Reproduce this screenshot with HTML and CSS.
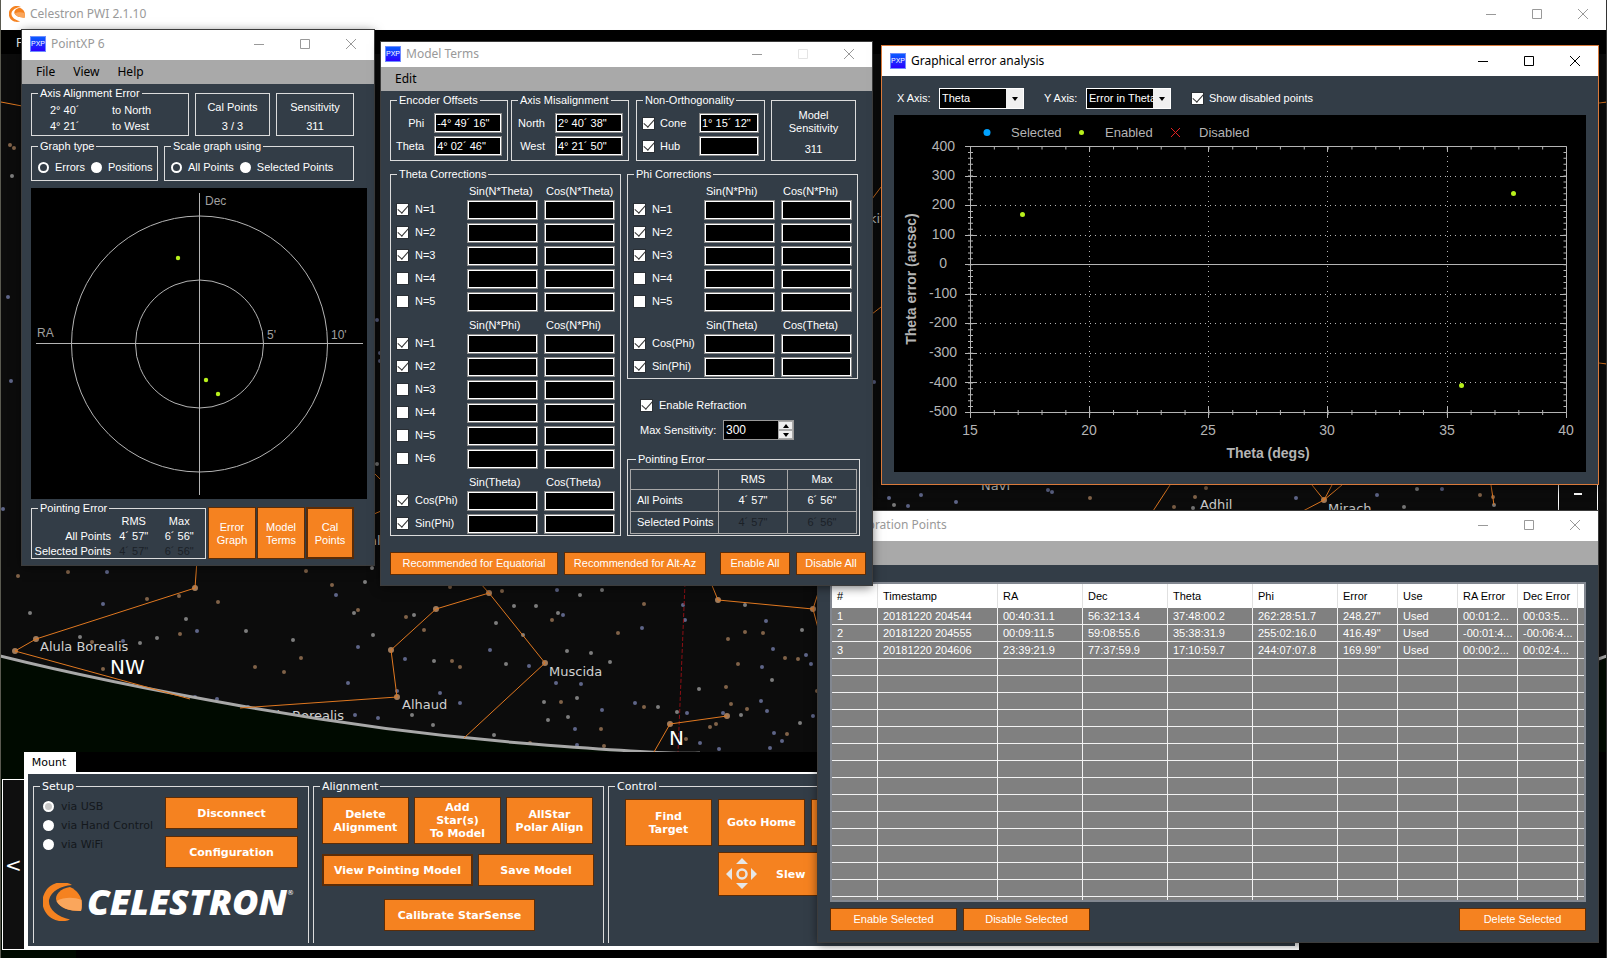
FILE: index.html
```html
<!DOCTYPE html>
<html lang="en">
<head>
<meta charset="utf-8">
<title>Celestron PWI 2.1.10</title>
<link rel="stylesheet" href="styles.css">
</head>
<body>
<svg class="defs" width="0" height="0" aria-hidden="true">
  <symbol id="globe" viewBox="0 0 39 38">
    <path fill="#f58220" d="M29 2A19.500 19.500 0 1 0 27 36.500C14 34 5 26 6 17C8 8 18 3 29 2Z"/>
    <path fill="#f58220" d="M27 4C34 7 39 14 39 21Q39 25 38 28C26 28 17 25 13.500 18C11 12 18 5 27 4Z"/>
    <path fill="#faa65c" d="M13.500 18C21 14 31 14 38.500 17Q39 25 38 28C26 28 17 25 13.500 18Z"/>
  </symbol>
  <symbol id="min" viewBox="0 0 12 12"><path d="M1 6.500H11" fill="none" stroke="currentColor"/></symbol>
  <symbol id="max" viewBox="0 0 12 12"><path d="M1.500 1.500H10.500V10.500H1.500Z" fill="none" stroke="currentColor"/></symbol>
  <symbol id="close" viewBox="0 0 12 12"><path d="M1 1L11 11M11 1L1 11" fill="none" stroke="currentColor"/></symbol>
</svg>

<svg class="sky" viewBox="0 0 1607 958" preserveAspectRatio="xMidYMid slice" aria-hidden="true">
  <rect width="1607" height="958" fill="#0c0c0c"/>
  <g fill="none" stroke-linecap="round" stroke-width="4">
    <path stroke="#7d7d7d" d="M30 613h0M186 619h0M246 631h0M157 638h0M140 643h0M80 637h0M293 640h0M373 635h0M365 582h0M354 613h0M372 568h0M414 615h0M412 715h0M602 590h0M580 595h0M514 606h0M536 606h0M558 613h0M496 623h0M523 635h0M567 651h0M591 653h0M506 664h0M434 661h0M610 662h0M577 698h0M544 702h0M658 707h0M433 725h0M568 717h0M548 720h0M494 735h0M745 605h0M802 630h0M772 680h0M699 689h0M741 715h0M677 712h0M800 723h0M12 176h0M377 464h0M894 505h0M1193 508h0M1404 507h0M1417 489h0M1494 505h0"/>
    <path stroke="#5e6588" d="M107 572h0M103 604h0M197 631h0M123 641h0M348 683h0M358 647h0M397 691h0M195 697h0M217 699h0M248 707h0M355 715h0M378 718h0M336 595h0M405 659h0M557 590h0M563 615h0M642 628h0M490 650h0M529 666h0M440 693h0M460 703h0M556 683h0M581 684h0M602 710h0M635 703h0M575 729h0M577 745h0M683 605h0M685 620h0M766 621h0M773 649h0M806 655h0M811 664h0M762 667h0M761 701h0M767 711h0M723 713h0M813 716h0M687 713h0M774 733h0M782 741h0M700 743h0M719 749h0M770 748h0M8 297h0M11 381h0M3 509h0M377 320h0M380 353h0M380 361h0M889 498h0M908 506h0M921 495h0M956 502h0M1048 490h0M1052 492h0M1296 498h0M1377 495h0M1442 489h0M874 382h0"/>
    <path stroke="#806248" d="M18 576h0M68 572h0M147 599h0M179 596h0M218 602h0M180 634h0M92 642h0M103 669h0M301 658h0M255 667h0M284 672h0M332 585h0M358 610h0M306 571h0M406 617h0M450 587h0M502 591h0M552 620h0M424 630h0M618 633h0M644 604h0M452 661h0M460 667h0M561 702h0M644 707h0M601 729h0M530 743h0M604 746h0M745 632h0M763 633h0M728 639h0M785 658h0M798 659h0M738 664h0M726 687h0M731 704h0M747 709h0M716 724h0M710 727h0M787 734h0M686 739h0M817 691h0M10 145h0M14 148h0M1090 498h0M1195 497h0M1174 507h0M1206 488h0M1480 495h0M1493 497h0"/>
    <path stroke="#a07a5a" stroke-width="6" d="M195 588h0M36 639h0M15 651h0M397 697h0M391 650h0M436 609h0M489 593h0M545 663h0M670 724h0M727 716h0M718 600h0M813 609h0M1324 500h0"/>
  </g>
  <path fill="none" stroke="#8c0f14" stroke-dasharray="4 2" d="M685 583L678 752"/>
  <g class="star-name">
    <text x="40" y="651">Alula Borealis</text>
    <text x="344" y="720" text-anchor="end">Tania Borealis</text>
    <text x="402" y="709">Alhaud</text>
    <text x="549" y="676">Muscida</text>
    <text x="981" y="490">Navi</text>
    <text x="1200" y="509">Adhil</text>
    <text x="1328" y="513">Mirach</text>
    <text x="369" y="545">al</text>
    <text x="869" y="223">kif</text>
  </g>
  <path fill="#000a00" d="M0 656Q220 708 420 732T690 752H1500L1607 656V958H0Z"/>
  <path fill="none" stroke="#a8a8a8" stroke-width="3" d="M0 656Q100 681 247 707T533 744T700 753M1590 662L1607 656"/>
  <path fill="none" stroke="#e07820" d="M1 102L22 106M197 560L195 588L36 639L15 651L150 688L190 699M240 708L397 697L391 650L436 609L489 593L545 663L464 738M480 583L489 593M654 752L670 724L727 716M711 583L718 600L813 609L819 590M813 609L819 632M374 473L381 480M374 514L381 511M872 199L881 187M872 314L881 307M1170 485L1153 511M1312 485L1324 500L1332 485M1342 485L1324 500L1303 511M1491 485L1494 505M1599 103L1607 102M1599 363L1607 364"/>
  <text class="compass" x="110" y="674">NW</text>
  <text class="compass" x="669" y="745">N</text>
</svg>

<div class="app">
  <header class="titlebar app-title">
    <svg class="app-icon"><use href="#globe"/></svg>
    <h1 class="caption">Celestron PWI 2.1.10</h1>
    <div class="controls">
      <button aria-label="Minimize"><svg><use href="#min"/></svg></button>
      <button aria-label="Maximize"><svg><use href="#max"/></svg></button>
      <button aria-label="Close"><svg><use href="#close"/></svg></button>
    </div>
  </header>
  <nav class="app-menu"><button>File</button></nav>
  <main class="view"></main>
  <section class="dock">
    <button class="drawer" aria-label="Hide panel">&lt;</button>
    <div class="tabs">
      <div class="tab-row"><button class="tab">Mount</button></div>
      <div class="panel">
        <fieldset class="panel-group setup">
          <legend>Setup</legend>
          <div class="setup-body">
            <div class="links">
              <label><input class="radio dim" type="radio" name="link" checked>via USB</label>
              <label><input class="radio" type="radio" name="link">via Hand Control</label>
              <label><input class="radio" type="radio" name="link">via WiFi</label>
            </div>
            <div class="stack">
              <button class="btn big">Disconnect</button>
              <button class="btn big">Configuration</button>
            </div>
          </div>
          <div class="logo">
            <svg class="logo-mark"><use href="#globe"/></svg>
            <span class="logo-name">CELESTRON</span><span class="logo-reg">®</span>
          </div>
        </fieldset>
        <fieldset class="panel-group align">
          <legend>Alignment</legend>
          <div class="align-top">
            <button class="btn big tall">Delete Alignment</button>
            <button class="btn big tall">Add<br>Star(s)<br>To Model</button>
            <button class="btn big tall">AllStar<br>Polar Align</button>
          </div>
          <div class="align-mid">
            <button class="btn big focus">View Pointing Model</button>
            <button class="btn big">Save Model</button>
          </div>
          <button class="btn big calibrate">Calibrate StarSense</button>
        </fieldset>
        <fieldset class="panel-group control">
          <legend>Control</legend>
          <div class="control-grid">
            <button class="btn big tall">Find<br>Target</button>
            <button class="btn big tall">Goto Home</button>
            <button class="btn big tall" aria-label="Stop"></button>
            <button class="btn big slew">
              <svg viewBox="0 0 32 32"><g fill="#e6e6e6"><path d="M10 6L16 0L22 6ZM10 25H22L16 31ZM6 10V22L0 16ZM25 10V22L31 16Z"/></g><circle cx="16" cy="16" r="4.500" fill="none" stroke="#e6e6e6" stroke-width="2.500"/></svg>
              Slew
            </button>
          </div>
        </fieldset>
      </div>
    </div>
  </section>
</div>

<button class="zoom-out" aria-label="Zoom out"><span class="dash"></span></button>

<section class="window pointxp">
  <header class="titlebar">
    <span class="pxp">PXP</span><h2 class="caption">PointXP 6</h2>
    <div class="controls">
      <button aria-label="Minimize"><svg><use href="#min"/></svg></button>
      <button aria-label="Maximize"><svg><use href="#max"/></svg></button>
      <button aria-label="Close"><svg><use href="#close"/></svg></button>
    </div>
  </header>
  <nav class="menu"><button>File</button><button>View</button><button>Help</button></nav>
  <div class="xp-body">
    <div class="xp-row">
      <fieldset class="group axis">
        <legend>Axis Alignment Error</legend>
        <dl class="axis-list"><dt>2° 40´</dt><dd>to North</dd><dt>4° 21´</dt><dd>to West</dd></dl>
      </fieldset>
      <div class="box cal"><span>Cal Points</span><span>3 / 3</span></div>
      <div class="box sens"><span>Sensitivity</span><span>311</span></div>
    </div>
    <div class="xp-row second">
      <fieldset class="group gtype">
        <legend>Graph type</legend>
        <div class="radios">
          <label><input class="radio" type="radio" name="gt" checked>Errors</label>
          <label><input class="radio" type="radio" name="gt">Positions</label>
        </div>
      </fieldset>
      <fieldset class="group scale">
        <legend>Scale graph using</legend>
        <div class="radios">
          <label><input class="radio" type="radio" name="sc" checked>All Points</label>
          <label><input class="radio" type="radio" name="sc">Selected Points</label>
        </div>
      </fieldset>
    </div>
    <svg class="polar" viewBox="31 188 336 311">
      <g fill="none" stroke="#b4b4b4">
        <path d="M199.500 193V495M36 343.500H363"/>
        <circle cx="199.500" cy="344" r="128"/><circle cx="199.500" cy="344" r="64"/>
      </g>
      <g fill="#b8f01c"><circle cx="178" cy="258" r="2.200"/><circle cx="206" cy="380" r="2.200"/><circle cx="218" cy="394" r="2.200"/></g>
      <g class="polar-label"><text x="205" y="205">Dec</text><text x="37" y="337">RA</text><text x="267" y="339">5'</text><text x="331" y="339">10'</text></g>
    </svg>
    <div class="xp-foot">
      <fieldset class="group perr">
        <legend>Pointing Error</legend>
        <table class="perr-table">
          <tr><td></td><th>RMS</th><th>Max</th></tr>
          <tr><th>All Points</th><td>4´ 57"</td><td>6´ 56"</td></tr>
          <tr><th>Selected Points</th><td class="off">4´ 57"</td><td class="off">6´ 56"</td></tr>
        </table>
      </fieldset>
      <button class="btn sq">Error<br>Graph</button>
      <button class="btn sq">Model<br>Terms</button>
      <button class="btn sq focus">Cal<br>Points</button>
    </div>
  </div>
</section>

<section class="window calib">
  <header class="titlebar">
    <span class="pxp">PXP</span><h2 class="caption">Calibration Points</h2>
    <div class="controls">
      <button aria-label="Minimize"><svg><use href="#min"/></svg></button>
      <button aria-label="Maximize"><svg><use href="#max"/></svg></button>
      <button aria-label="Close"><svg><use href="#close"/></svg></button>
    </div>
  </header>
  <nav class="menu" aria-label="Calibration menu"></nav>
  <div class="calib-body">
    <div class="list">
      <table class="points">
        <colgroup><col class="c-id"><col class="c-time"><col class="c-ang"><col class="c-ang"><col class="c-ang"><col class="c-ang"><col class="c-err"><col class="c-err"><col class="c-err"><col class="c-err"><col></colgroup>
        <thead><tr><th>#</th><th>Timestamp</th><th>RA</th><th>Dec</th><th>Theta</th><th>Phi</th><th>Error</th><th>Use</th><th>RA Error</th><th>Dec Error</th><th></th></tr></thead>
        <tbody>
          <tr><td>1</td><td>20181220 204544</td><td>00:40:31.1</td><td>56:32:13.4</td><td>37:48:00.2</td><td>262:28:51.7</td><td>248.27"</td><td>Used</td><td>00:01:2...</td><td>00:03:5...</td><td></td></tr>
          <tr><td>2</td><td>20181220 204555</td><td>00:09:11.5</td><td>59:08:55.6</td><td>35:38:31.9</td><td>255:02:16.0</td><td>416.49"</td><td>Used</td><td>-00:01:4...</td><td>-00:06:4...</td><td></td></tr>
          <tr><td>3</td><td>20181220 204606</td><td>23:39:21.9</td><td>77:37:59.9</td><td>17:10:59.7</td><td>244:07:07.8</td><td>169.99"</td><td>Used</td><td>00:00:2...</td><td>00:02:4...</td><td></td></tr>
          <tr><td><td><td><td><td><td><td><td><td><td><td></tr>
          <tr><td><td><td><td><td><td><td><td><td><td><td></tr>
          <tr><td><td><td><td><td><td><td><td><td><td><td></tr>
          <tr><td><td><td><td><td><td><td><td><td><td><td></tr>
          <tr><td><td><td><td><td><td><td><td><td><td><td></tr>
          <tr><td><td><td><td><td><td><td><td><td><td><td></tr>
          <tr><td><td><td><td><td><td><td><td><td><td><td></tr>
          <tr><td><td><td><td><td><td><td><td><td><td><td></tr>
          <tr><td><td><td><td><td><td><td><td><td><td><td></tr>
          <tr><td><td><td><td><td><td><td><td><td><td><td></tr>
          <tr><td><td><td><td><td><td><td><td><td><td><td></tr>
          <tr><td><td><td><td><td><td><td><td><td><td><td></tr>
          <tr><td><td><td><td><td><td><td><td><td><td><td></tr>
          <tr><td><td><td><td><td><td><td><td><td><td><td></tr>
          <tr><td><td><td><td><td><td><td><td><td><td><td></tr>
        </tbody>
      </table>
    </div>
    <div class="calib-foot">
      <button class="btn wide">Enable Selected</button>
      <button class="btn wide">Disable Selected</button>
      <button class="btn wide last">Delete Selected</button>
    </div>
  </div>
</section>

<section class="window terms-win">
  <header class="titlebar low">
    <span class="pxp">PXP</span><h2 class="caption">Model Terms</h2>
    <div class="controls">
      <button aria-label="Minimize"><svg><use href="#min"/></svg></button>
      <button class="faint" aria-label="Maximize" disabled><svg><use href="#max"/></svg></button>
      <button aria-label="Close"><svg><use href="#close"/></svg></button>
    </div>
  </header>
  <nav class="menu"><button>Edit</button></nav>
  <div class="mt-body">
    <div class="mt-top">
      <fieldset class="group offsets">
        <legend>Encoder Offsets</legend>
        <div class="pair">
          <label for="phi">Phi</label><input class="field" id="phi" value="-4° 49´ 16&quot;">
          <label for="theta">Theta</label><input class="field" id="theta" value="4° 02´ 46&quot;">
        </div>
      </fieldset>
      <fieldset class="group offsets">
        <legend>Axis Misalignment</legend>
        <div class="pair">
          <label for="north">North</label><input class="field" id="north" value="2° 40´ 38&quot;">
          <label for="west">West</label><input class="field" id="west" value="4° 21´ 50&quot;">
        </div>
      </fieldset>
      <fieldset class="group ortho">
        <legend>Non-Orthogonality</legend>
        <div class="pair ticks">
          <label><input class="tick" type="checkbox" checked>Cone</label><input class="field" aria-label="Cone value" value="1° 15´ 12&quot;">
          <label><input class="tick" type="checkbox" checked>Hub</label><input class="field" aria-label="Hub value">
        </div>
      </fieldset>
      <div class="box model-sens"><span>Model<br>Sensitivity</span><span>311</span></div>
    </div>
    <div class="mt-cols">
      <fieldset class="group corr">
        <legend>Theta Corrections</legend>
        <div class="terms">
          <span class="h1">Sin(N*Theta)</span><span>Cos(N*Theta)</span>
          <label><input class="tick" type="checkbox" checked>N=1</label><input class="field" aria-label="Sin 1 Theta"><input class="field" aria-label="Cos 1 Theta">
          <label><input class="tick" type="checkbox" checked>N=2</label><input class="field" aria-label="Sin 2 Theta"><input class="field" aria-label="Cos 2 Theta">
          <label><input class="tick" type="checkbox" checked>N=3</label><input class="field" aria-label="Sin 3 Theta"><input class="field" aria-label="Cos 3 Theta">
          <label><input class="tick" type="checkbox">N=4</label><input class="field" aria-label="Sin 4 Theta"><input class="field" aria-label="Cos 4 Theta">
          <label><input class="tick" type="checkbox">N=5</label><input class="field" aria-label="Sin 5 Theta"><input class="field" aria-label="Cos 5 Theta">
          <span class="h1">Sin(N*Phi)</span><span>Cos(N*Phi)</span>
          <label><input class="tick" type="checkbox" checked>N=1</label><input class="field" aria-label="Sin 1 Phi"><input class="field" aria-label="Cos 1 Phi">
          <label><input class="tick" type="checkbox" checked>N=2</label><input class="field" aria-label="Sin 2 Phi"><input class="field" aria-label="Cos 2 Phi">
          <label><input class="tick" type="checkbox">N=3</label><input class="field" aria-label="Sin 3 Phi"><input class="field" aria-label="Cos 3 Phi">
          <label><input class="tick" type="checkbox">N=4</label><input class="field" aria-label="Sin 4 Phi"><input class="field" aria-label="Cos 4 Phi">
          <label><input class="tick" type="checkbox">N=5</label><input class="field" aria-label="Sin 5 Phi"><input class="field" aria-label="Cos 5 Phi">
          <label><input class="tick" type="checkbox">N=6</label><input class="field" aria-label="Sin 6 Phi"><input class="field" aria-label="Cos 6 Phi">
          <span class="h1">Sin(Theta)</span><span>Cos(Theta)</span>
          <label><input class="tick" type="checkbox" checked>Cos(Phi)</label><input class="field" aria-label="Sin Theta Cos Phi"><input class="field" aria-label="Cos Theta Cos Phi">
          <label><input class="tick" type="checkbox" checked>Sin(Phi)</label><input class="field" aria-label="Sin Theta Sin Phi"><input class="field" aria-label="Cos Theta Sin Phi">
        </div>
      </fieldset>
      <div class="mt-right">
        <fieldset class="group corr">
          <legend>Phi Corrections</legend>
          <div class="terms">
            <span class="h1">Sin(N*Phi)</span><span>Cos(N*Phi)</span>
            <label><input class="tick" type="checkbox" checked>N=1</label><input class="field" aria-label="Sin 1"><input class="field" aria-label="Cos 1">
            <label><input class="tick" type="checkbox" checked>N=2</label><input class="field" aria-label="Sin 2"><input class="field" aria-label="Cos 2">
            <label><input class="tick" type="checkbox" checked>N=3</label><input class="field" aria-label="Sin 3"><input class="field" aria-label="Cos 3">
            <label><input class="tick" type="checkbox">N=4</label><input class="field" aria-label="Sin 4"><input class="field" aria-label="Cos 4">
            <label><input class="tick" type="checkbox">N=5</label><input class="field" aria-label="Sin 5"><input class="field" aria-label="Cos 5">
            <span class="h1">Sin(Theta)</span><span>Cos(Theta)</span>
            <label><input class="tick" type="checkbox" checked>Cos(Phi)</label><input class="field" aria-label="Cos Phi Sin Theta"><input class="field" aria-label="Cos Phi Cos Theta">
            <label><input class="tick" type="checkbox" checked>Sin(Phi)</label><input class="field" aria-label="Sin Phi Sin Theta"><input class="field" aria-label="Sin Phi Cos Theta">
          </div>
        </fieldset>
        <label class="refraction"><input class="tick" type="checkbox" checked>Enable Refraction</label>
        <div class="max-sens">
          <label for="maxs">Max Sensitivity:</label>
          <div class="spinner">
            <input id="maxs" type="text" value="300">
            <div class="arrows"><button aria-label="Up"><svg viewBox="0 0 6 4"><path d="M0 4L3 0L6 4Z"/></svg></button><button aria-label="Down"><svg viewBox="0 0 6 4"><path d="M0 0H6L3 4Z"/></svg></button></div>
          </div>
        </div>
        <fieldset class="group mt-err">
          <legend>Pointing Error</legend>
          <table class="grid-table">
            <tr><td></td><th>RMS</th><th>Max</th></tr>
            <tr><th class="rowh">All Points</th><td>4´ 57"</td><td>6´ 56"</td></tr>
            <tr><th class="rowh">Selected Points</th><td class="off">4´ 57"</td><td class="off">6´ 56"</td></tr>
          </table>
        </fieldset>
      </div>
    </div>
    <div class="mt-foot">
      <button class="btn eq">Recommended for Equatorial</button>
      <button class="btn az">Recommended for Alt-Az</button>
      <button class="btn all">Enable All</button>
      <button class="btn all">Disable All</button>
    </div>
  </div>
</section>

<section class="window graph active">
  <header class="titlebar">
    <span class="pxp">PXP</span><h2 class="caption">Graphical error analysis</h2>
    <div class="controls">
      <button aria-label="Minimize"><svg><use href="#min"/></svg></button>
      <button aria-label="Maximize"><svg><use href="#max"/></svg></button>
      <button aria-label="Close"><svg><use href="#close"/></svg></button>
    </div>
  </header>
  <div class="graph-body">
    <div class="graph-bar">
      <label class="axis-pick">X Axis:<span class="combo"><select><option>Theta</option></select></span></label>
      <label class="axis-pick">Y Axis:<span class="combo"><select><option>Error in Theta</option></select></span></label>
      <label class="show"><input class="tick" type="checkbox" checked>Show disabled points</label>
    </div>
    <svg class="chart" viewBox="894 115 692 357">
      <circle cx="987" cy="132.500" r="3.500" fill="#00a2ff"/><circle cx="1081.500" cy="132.500" r="2.500" fill="#b8f01c"/>
      <path d="M1171 128L1180 137M1180 128L1171 137" stroke="#e02020" fill="none"/>
      <g class="legend-text"><text x="1011" y="137">Selected</text><text x="1105" y="137">Enabled</text><text x="1199" y="137">Disabled</text></g>
      <g fill="none" stroke="#b4b4b4">
        <g stroke-dasharray="1 4"><path d="M975 176.500H1562M975 205.500H1562M975 235.500H1562M975 294.500H1562M975 323.500H1562M975 353.500H1562M975 382.500H1562M1089.500 151V407M1208.500 151V407M1327.500 151V407M1447.500 151V407"/></g>
        <path d="M970.500 146.500H1566.500V412.500H970.500ZM970 264.500H1566"/>
        <path d="M965 146.500H977M965 176.500H977M965 205.500H977M965 235.500H977M965 264.500H977M965 294.500H977M965 323.500H977M965 353.500H977M965 382.500H977M965 412.500H977M1561 176.500H1566M1561 205.500H1566M1561 235.500H1566M1561 294.500H1566M1561 323.500H1566M1561 353.500H1566M1561 382.500H1566"/>
        <path d="M970.500 406V418M1089.500 406V418M1208.500 406V418M1327.500 406V418M1447.500 406V418M1566.500 406V418M1089.500 146V152M1208.500 146V152M1327.500 146V152M1447.500 146V152"/>
        <path stroke-width="5" stroke-dasharray="1 4.910" d="M970.500 146V412"/>
        <path stroke-width="3" stroke-dasharray="1 4.910" d="M1565 146V412"/>
        <path stroke-width="5" stroke-dasharray="1 22.840" d="M970 412.500H1566"/>
        <path stroke-width="3" stroke-dasharray="1 22.840" d="M970 148H1566"/>
      </g>
      <g fill="#b8f01c"><circle cx="1022.500" cy="214.500" r="2.500"/><circle cx="1513.500" cy="193.500" r="2.500"/><circle cx="1461.500" cy="385.500" r="2.500"/></g>
      <g class="tick-text" text-anchor="end"><text x="955" y="151">400</text><text x="955" y="180">300</text><text x="955" y="209">200</text><text x="955" y="239">100</text><text x="947" y="268">0</text><text x="957" y="298">-100</text><text x="957" y="327">-200</text><text x="957" y="357">-300</text><text x="957" y="387">-400</text><text x="957" y="416">-500</text></g>
      <g class="tick-text" text-anchor="middle"><text x="970" y="435">15</text><text x="1089" y="435">20</text><text x="1208" y="435">25</text><text x="1327" y="435">30</text><text x="1447" y="435">35</text><text x="1566" y="435">40</text></g>
      <g class="axis-title" text-anchor="middle"><text x="1268" y="458">Theta (degs)</text><text transform="translate(916 279) rotate(-90)">Theta error (arcsec)</text></g>
    </svg>
  </div>
</section>
</body>
</html>
```
FILE: styles.css
```css
:root {
  --slate: #333d47;
  --orange: #f58220;
  --rim: #5c2c06;
  --line: #dcdcdc;
}
* { box-sizing: border-box; }
body {
  margin: 0;
  background: #000;
  color: #fff;
  font: 11px/13px "Liberation Sans", Arial, sans-serif;
  overflow: hidden;
}
button, input, select { font: inherit; color: inherit; margin: 0; padding: 0; border: 0; }
fieldset { margin: 0; padding: 0; min-width: 0; border: 1px solid var(--line); }
legend { margin-left: 6px; padding: 0 2px; line-height: 11px; }
h1, h2, dl, dd { margin: 0; }
label { display: flex; align-items: center; }
svg { display: block; }
.defs { position: absolute; }

.sky { position: absolute; inset: 0; width: 100%; height: 100%; }
.star-name { font: 13px "DejaVu Sans", Verdana, sans-serif; fill: #d0d0d0; }
.compass { font: 20px "DejaVu Sans", Verdana, sans-serif; fill: #fff; }

/* Main application */
.app { position: relative; display: flex; flex-direction: column; min-height: 100vh; border-left: 1px solid #5a5a50; border-right: 1px solid #333; }
.titlebar { display: flex; align-items: center; height: 30px; padding: 0 0 2px 8px; background: #fff; color: #999; }
.titlebar.low { height: 25px; padding-left: 4px; }
.app-icon { width: 16px; height: 16px; }
.caption { flex: 1; padding-left: 5px; font: 12px/16px "Noto Sans", "Open Sans", sans-serif; }
.pxp { width: 16px; height: 16px; background: linear-gradient(#0a5cff, #2a00ff); border: 1px solid #6f8cff; color: #fff; font-size: 7px; line-height: 14px; text-align: center; }
.controls { display: flex; }
.controls button { display: grid; place-items: center; width: 46px; height: 22px; background: none; }
.controls svg { width: 12px; height: 12px; }
.controls .faint { color: #e4e4e4; }
.app-menu { height: 24px; padding-left: 15px; background: #000; }
.app-menu button { height: 24px; background: none; font: 12px "Noto Sans", sans-serif; }
.view { flex: 1; }
.dock { display: grid; grid-template-columns: 22px 1fr; padding: 0 307px 8px 1px; background: linear-gradient(90deg, transparent 75px, #000 75px); }
.drawer { margin-top: 27px; background: #0f0f0f; border: 1px solid #fff; border-right: 0; font: 20px "DejaVu Sans", sans-serif; }
.tabs { font: 11px/13px "DejaVu Sans", Verdana, sans-serif; }
.tab-row { height: 20px; display: flex; }
.tab { width: 52px; padding-right: 2px; background: #fff; color: #000; }
.panel { display: flex; align-items: stretch; gap: 4px; height: 178px; padding: 6px 0 3px 5px; background: var(--slate); border: 4px solid #fff; border-top-width: 2px; }
.panel-group { border-bottom: 0; }
.panel-group legend { line-height: 13px; }
.setup { width: 276px; }
.align { width: 291px; padding: 4px 8px 0; }
.align legend, .control legend { margin-left: -2px; }
.control { flex: 1; overflow: hidden; }
.control legend { margin-left: 6px; }
.setup-body { display: flex; justify-content: space-between; padding: 4px 10px 0 9px; }
.links { display: flex; flex-direction: column; color: #14181c; }
.links label { height: 19px; gap: 7px; }
.stack { display: grid; gap: 7px; width: 133px; }
.btn { background: var(--orange); border: 1px solid var(--rim); color: #fff; height: 23px; text-align: center; }
.btn.focus { border-width: 2px; }
.btn.big { height: 32px; font-weight: bold; }
.btn.big.tall { width: 87px; height: 47px; }
.align-top { display: flex; gap: 5px; }
.align-mid { display: grid; grid-template-columns: 151px 116px; gap: 5px; margin-top: 10px; }
.btn.calibrate { display: block; width: 151px; margin: 13px 0 0 62px; }
.control-grid { display: grid; grid-template-columns: 87px 87px 87px; gap: 6px; padding: 6px 0 0 16px; }
.btn.slew { grid-column: 2 / 4; height: 44px; display: flex; align-items: center; gap: 18px; padding-left: 7px; }
.slew svg { width: 32px; height: 32px; }
.logo { display: flex; align-items: center; padding: 15px 0 0 9px; }
.logo-mark { flex: none; width: 39px; height: 38px; }
.logo-name { padding-left: 5px; font: italic 800 36px/38px "Open Sans", sans-serif; }
.logo-reg { font-size: 7px; align-self: flex-start; line-height: 20px; }
.zoom-out { position: absolute; top: 430px; left: 1558px; width: 40px; height: 100px; padding-top: 28px; background: #0c0c0c; border: 1px solid #fff; }
.dash { display: block; width: 8px; height: 2px; margin: 0 auto; background: #fff; }

/* Floating windows */
.window { position: absolute; background: var(--slate); box-shadow: 0 2px 10px rgba(0, 0, 0, .6); outline: 1px solid #3c3c3c; }
.menu { display: flex; gap: 18px; height: 24px; padding-left: 14px; background: #a9a9a9; }
.menu button { background: none; color: #000; font: 12px/16px "Noto Sans", "Open Sans", sans-serif; }
.group legend { white-space: nowrap; }
.box { display: flex; flex-direction: column; align-items: center; border: 1px solid var(--line); text-align: center; }
.radio, .tick { appearance: none; flex: none; background: #fff; }
.radio { width: 11px; height: 11px; border-radius: 50%; }
.radio:checked { background: var(--slate); border: 2px solid #fff; }
.radio.dim:checked { background: #c8c8c8; }
.tick { display: grid; place-items: center; width: 13px; height: 13px; border: 1px solid #2a2f35; }
.tick:checked::before { content: ""; width: 5px; height: 9px; margin-top: -3px; border: solid #333; border-width: 0 1px 1px 0; transform: rotate(42deg); }
.field { width: 100%; height: 20px; padding: 0 2px; background: #000; border: 1px solid #8a8a8a; box-shadow: inset 0 0 0 1px #fff; }
.off { color: #1b2127; }
th { font-weight: normal; }

.pointxp { left: 22px; top: 30px; width: 352px; }
.xp-body { padding: 4px 7px 6px 9px; }
.xp-row { display: flex; align-items: flex-end; gap: 6px; }
.xp-row.second { margin-top: 5px; }
.axis { width: 158px; height: 48px; }
.axis-list { display: grid; grid-template-columns: 62px 1fr; padding: 3px 0 0 18px; line-height: 16px; }
.cal, .sens { height: 43px; padding-top: 7px; gap: 6px; }
.cal { width: 75px; }
.sens { width: 78px; }
.gtype { width: 127px; height: 40px; }
.scale { width: 190px; height: 40px; }
.radios { display: flex; gap: 6px; padding: 9px 0 0 6px; }
.radios label { gap: 6px; }
.polar { width: 336px; height: 311px; margin-top: 7px; background: #000; }
.polar-label { font-size: 12px; fill: #a0a0a0; }
.xp-foot { display: flex; align-items: flex-end; gap: 1px; margin-top: 4px; }
.perr { width: 175px; height: 56px; margin-right: 1px; }
.perr-table { border-collapse: collapse; width: 170px; }
.perr-table td, .perr-table th { height: 15px; padding: 0; line-height: 15px; text-align: center; }
.perr-table th:first-child { width: 79px; text-align: right; white-space: nowrap; }
.btn.sq { width: 48px; height: 52px; padding-top: 2px; }

.calib { left: 818px; top: 511px; width: 780px; }
.calib-body { padding: 17px 12px 11px; }
.list { border: 2px solid #828790; height: 320px; overflow: hidden; background: #808080; }
.points { width: 100%; table-layout: fixed; border-collapse: separate; border-spacing: 0; }
.c-id { width: 46px; } .c-time { width: 120px; } .c-ang { width: 85px; } .c-err { width: 60px; }
.points th { height: 24px; padding: 0 5px; background: #fff; color: #000; text-align: left; border-right: 1px solid #e0e0e0; white-space: nowrap; }
.points td { height: 17px; padding: 1px 0 0 5px; line-height: 15px; border: solid #f2f2f2; border-width: 0 1px 1px 0; white-space: nowrap; }
.points th:last-child, .points td:last-child { border-right: 0; padding: 0; }
.calib-foot { display: flex; gap: 6px; margin-top: 6px; }
.btn.wide { width: 127px; }
.btn.last { margin-left: auto; }

.terms-win { left: 381px; top: 42px; width: 491px; }
.mt-body { padding: 4px 6px 10px 9px; }
.mt-top { display: flex; align-items: flex-end; gap: 3px; }
.offsets { width: 118px; height: 66px; }
.ortho { width: 129px; height: 66px; margin-left: 4px; }
.pair { display: grid; grid-template-columns: 1fr 68px; gap: 3px 10px; padding: 7px 5px 0; }
.pair label { justify-content: flex-end; }
.pair.ticks { grid-template-columns: 1fr 60px; gap: 3px 0; }
.pair.ticks label { justify-content: flex-start; gap: 5px; }
.model-sens { width: 85px; height: 61px; margin-left: 3px; padding-top: 8px; gap: 8px; }
.mt-cols { display: flex; align-items: flex-start; gap: 6px; margin-top: 8px; }
.corr { width: 231px; }
.terms { display: grid; grid-template-columns: 1fr 71px 71px; grid-auto-rows: auto; gap: 3px 6px; padding: 1px 5px; }
.terms span { height: 16px; padding-left: 2px; line-height: 20px; white-space: nowrap; }
.terms .h1 { grid-column: 2; }
.terms label { gap: 6px; height: 18px; }
.refraction { gap: 6px; height: 16px; margin: 18px 0 0 13px; }
.max-sens { display: flex; margin: 7px 0 0 13px; }
.max-sens label { width: 83px; }
.spinner { display: flex; width: 71px; height: 20px; border: 1px solid #999; background: #000; }
.spinner input { flex: 1; min-width: 0; padding-left: 2px; background: none; font-size: 12px; }
.arrows { display: grid; width: 15px; }
.arrows button { display: grid; place-items: center; background: #f0f0f0; border: 1px solid #aaa; }
.arrows svg { width: 6px; height: 4px; }
.mt-err { width: 233px; height: 82px; margin-top: 14px; padding: 4px 2px 0; }
.grid-table { width: 100%; border-collapse: collapse; }
.grid-table td, .grid-table th { height: 22px; padding: 0; border: 1px solid #a8a8a8; text-align: center; }
.grid-table tr:first-child td { width: 88px; }
.grid-table tr:first-child th, .grid-table tr:first-child td { height: 20px; }
.grid-table .rowh { padding-left: 6px; text-align: left; white-space: nowrap; }
.mt-foot { display: flex; gap: 6px; margin-top: 16px; }
.eq { width: 168px; }
.az { width: 142px; margin-right: 8px; }
.all { width: 70px; }

.graph { left: 881px; top: 45px; width: 718px; border: 1px solid #d9793a; outline: 0; }
.active .titlebar { padding-bottom: 0; color: #000; }
.graph-body { padding: 12px; }
.graph-bar { display: flex; gap: 20px; padding-left: 3px; height: 21px; }
.axis-pick { display: grid; grid-template-columns: 42px 85px; }
.combo { position: relative; display: block; }
.combo select { appearance: none; display: block; width: 100%; height: 21px; padding: 0 16px 0 2px; background: linear-gradient(#f0f0f0, #f0f0f0) right / 17px 100% no-repeat #000; border: 1px solid #fff; border-radius: 0; }
.combo::after { content: ""; position: absolute; right: 6px; top: 9px; border: 3px solid transparent; border-top: 4px solid #000; border-bottom: 0; }
.show { gap: 5px; }
.chart { width: 692px; height: 357px; margin-top: 6px; background: #000; }
.legend-text, .tick-text, .axis-title { fill: #b4b4b4; font-size: 13px; }
.tick-text { font-size: 14px; }
.axis-title { font-size: 14px; font-weight: bold; }
```
